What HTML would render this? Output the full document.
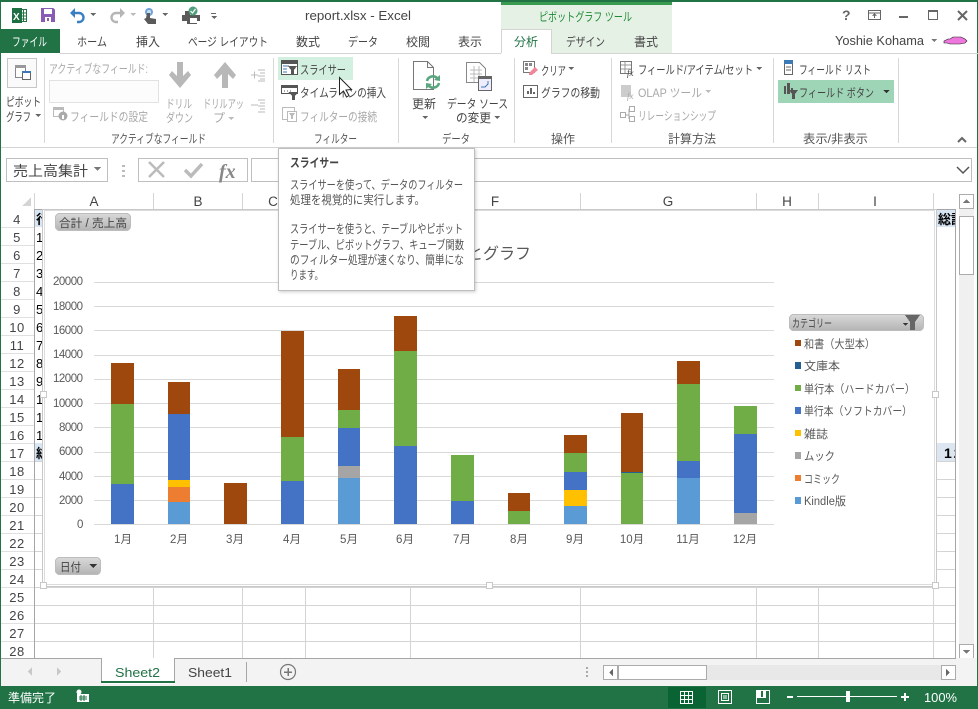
<!DOCTYPE html>
<html lang="ja"><head><meta charset="utf-8"><title>report.xlsx - Excel</title>
<style>
html,body{margin:0;padding:0;background:#fff;width:978px;height:709px;overflow:hidden}
svg{display:block;position:absolute;left:0;top:0}
text{font-family:"Liberation Sans","Noto Sans CJK JP",sans-serif;font-size:12px;fill:#444;white-space:pre}
.g{fill:#a8a8a8}.d{fill:#444}.l{font-size:11.5px;fill:#595959}
.rn{font-size:13px;fill:#444;text-anchor:middle;letter-spacing:.5px}
.ch{font-size:13.5px;fill:#444;text-anchor:middle}
.gl{font-size:12px;fill:#555}
.tp{font-size:12px;fill:#555}
.y{font-size:11.5px;fill:#595959}
.x{font-size:11.5px;fill:#595959;text-anchor:middle}
</style></head><body>
<svg width="978" height="709" viewBox="0 0 978 709" xmlns="http://www.w3.org/2000/svg" shape-rendering="crispEdges">
<defs>
<linearGradient id="btn" x1="0" y1="0" x2="0" y2="1"><stop offset="0" stop-color="#d9d9d9"/><stop offset="1" stop-color="#b4b4b4"/></linearGradient>
<clipPath id="cA"><rect x="35" y="209" width="7" height="380"/></clipPath>
<clipPath id="cJ"><rect x="937" y="209" width="18" height="260"/></clipPath>
<filter id="sh" x="-5%" y="-5%" width="110%" height="110%"><feDropShadow dx="1" dy="1" stdDeviation="1.5" flood-color="#000" flood-opacity=".2"/></filter>
</defs>
<rect width="978" height="709" fill="#fff"/>

<!-- context tab band -->
<rect x="501" y="0" width="171" height="53" fill="#e6f1e6"/>
<rect x="501" y="0" width="171" height="5" fill="#3a9a4f"/>
<!-- window border -->
<rect x="0" y="0" width="978" height="2" fill="#217346"/>
<rect x="0" y="0" width="1" height="709" fill="#217346"/>
<rect x="977" y="0" width="1" height="709" fill="#217346"/>

<!-- QAT -->
<rect x="19.500" y="9.500" width="7" height="12" fill="#fff" stroke="#217346"/><path d="M22 13h5M22 16h5M22 19h5M23.500 10v11" stroke="#217346" fill="none"/>
<rect x="12" y="8" width="10" height="15" fill="#1e6f42"/><text x="13" y="20" style="font-size:10px;font-weight:bold;fill:#fff">X</text>
<path d="M41 8h12l2 2v12H41z" fill="#8a5bb5"/><rect x="44" y="9" width="8" height="5" fill="#fff"/><rect x="45" y="17" width="6" height="5" fill="#fff"/><rect x="47" y="18" width="2" height="3" fill="#8a5bb5"/>
<g shape-rendering="auto">
<path d="M72 13h7a4.500 4.500 0 0 1 0 9h-2" fill="none" stroke="#3a7fc1" stroke-width="2.400"/><path d="M70 13l5-5v10z" fill="#3a7fc1"/>
<path d="M123 13h-7a4.500 4.500 0 0 0 0 9h2" fill="none" stroke="#b5b5b5" stroke-width="2.400"/><path d="M125 13l-5-5v10z" fill="#b5b5b5"/>
<circle cx="149" cy="12" r="4" fill="#6ea3d6"/><circle cx="149" cy="12" r="2" fill="#c9def2"/>
<path d="M147 13h3v5l6 1v5h-8l-4-5 2-1z" fill="#5a5a5a"/>
</g>
<path d="M182 15h3v-4h5v4h10v6h-3v3h-10v-3h-5z" fill="#5a5a5a"/><rect x="190" y="18" width="7" height="5" fill="#fff"/>
<g shape-rendering="auto"><circle cx="193" cy="11" r="4.500" fill="#4f9e7c"/><path d="M190.500 11l2 2 3-4" stroke="#fff" fill="none" stroke-width="1.200"/></g>
<path d="M90 13h6l-3 3z M162 13h6l-3 3z" fill="#666"/><path d="M130 13h6l-3 3z" fill="#bbb"/>
<rect x="211" y="13" width="5" height="1" fill="#666"/><path d="M211 16h6l-3 3z" fill="#666"/>

<!-- title -->
<text x="305" y="20" textLength="106" lengthAdjust="spacingAndGlyphs" style="font-size:13px">report.xlsx - Excel</text>
<text x="539" y="21" textLength="93" lengthAdjust="spacingAndGlyphs" style="fill:#1e8a35">ピボットグラフ ツール</text>

<!-- window controls -->
<text x="842" y="20" style="font-size:14px;font-weight:bold;fill:#666">?</text>
<rect x="868.500" y="10.500" width="12" height="9" fill="none" stroke="#666"/><path d="M868 13h13M874.500 18v-4M872.500 16l2-2 2 2" stroke="#666" fill="none"/>
<rect x="899" y="16" width="9" height="2" fill="#666"/>
<rect x="928.500" y="10.500" width="9" height="9" fill="none" stroke="#666"/><rect x="928" y="10" width="10" height="2" fill="#666"/>
<path d="M958 11l9 9M967 11l-9 9" stroke="#666" stroke-width="2" fill="none" shape-rendering="auto"/>

<!-- tabs -->
<rect x="1" y="29" width="59" height="24" fill="#217346"/>
<text x="12" y="46" textLength="35" lengthAdjust="spacingAndGlyphs" style="fill:#fff">ファイル</text>
<text x="77" y="46" textLength="30" lengthAdjust="spacingAndGlyphs">ホーム</text>
<text x="136" y="46" textLength="24" lengthAdjust="spacingAndGlyphs">挿入</text>
<text x="188" y="46" textLength="80" lengthAdjust="spacingAndGlyphs">ページ レイアウト</text>
<text x="296" y="46" textLength="24" lengthAdjust="spacingAndGlyphs">数式</text>
<text x="348" y="46" textLength="30" lengthAdjust="spacingAndGlyphs">データ</text>
<text x="406" y="46" textLength="24" lengthAdjust="spacingAndGlyphs">校閲</text>
<text x="458" y="46" textLength="24" lengthAdjust="spacingAndGlyphs">表示</text>
<rect x="60" y="53" width="918" height="1" fill="#d4d4d4"/>
<rect x="501" y="29" width="50" height="25" fill="#fff"/><path d="M501.500 53V29.500h50V53" fill="none" stroke="#d4d4d4"/>
<text x="514" y="46" textLength="24" lengthAdjust="spacingAndGlyphs" style="fill:#217346">分析</text>
<text x="566" y="46" textLength="39" lengthAdjust="spacingAndGlyphs">デザイン</text>
<text x="634" y="46" textLength="24" lengthAdjust="spacingAndGlyphs">書式</text>
<text x="835" y="45" textLength="89" lengthAdjust="spacingAndGlyphs" style="font-size:13px">Yoshie Kohama</text>
<path d="M931 39h6l-3 3z" fill="#777"/>
<path d="M944 41l4-2h2l3-2h8l4 2 2 2-2 2-5 1h-10l-3-1h-3z" fill="#ee77dd" stroke="#222" stroke-width=".6" shape-rendering="auto"/>

<!-- ribbon separators -->
<g fill="#d8d8d8"><rect x="44" y="58" width="1" height="85"/><rect x="273" y="58" width="1" height="85"/><rect x="398" y="58" width="1" height="85"/><rect x="514" y="58" width="1" height="85"/><rect x="611" y="58" width="1" height="85"/><rect x="773" y="58" width="1" height="85"/><rect x="898" y="58" width="1" height="85"/></g>
<rect x="1" y="147" width="976" height="1" fill="#d4d4d4"/>

<!-- pivot chart button -->
<rect x="7.500" y="58.500" width="29" height="29" fill="#fafafa" stroke="#c6c6c6"/>
<rect x="15.500" y="65.500" width="10" height="12" fill="#fff" stroke="#888"/><rect x="15" y="65" width="11" height="3" fill="#999"/>
<rect x="22.500" y="71.500" width="8" height="8" fill="#fff" stroke="#666"/><rect x="22" y="71" width="9" height="2" fill="#3d79b5"/>
<text x="6" y="106" textLength="35" lengthAdjust="spacingAndGlyphs">ピボット</text>
<text x="6" y="121" textLength="25" lengthAdjust="spacingAndGlyphs">グラフ</text>
<path d="M35 114h6l-3 3z" fill="#666"/>

<!-- active field -->
<text x="49" y="73" textLength="99" lengthAdjust="spacingAndGlyphs" class="g">アクティブなフィールド:</text>
<rect x="49.500" y="80.500" width="109" height="22" fill="#fcfcfc" stroke="#e2e2e2"/>
<rect x="53.500" y="107.500" width="10" height="9" fill="#fff" stroke="#bbb"/><rect x="53" y="107" width="11" height="3" fill="#bbb"/><circle cx="63" cy="116" r="4.500" fill="#aaa" shape-rendering="auto"/><rect x="62" y="115" width="2" height="4" fill="#fff"/>
<text x="70" y="121" textLength="78" lengthAdjust="spacingAndGlyphs" class="g">フィールドの設定</text>
<path d="M177 62h6v14l5-5 3 4-11 13-11-13 3-4 5 5z" fill="#b8b8b8" shape-rendering="auto"/>
<path d="M222 88h6V74l5 5 3-4-11-13-11 13 3 4 5-5z" fill="#b8b8b8" shape-rendering="auto"/>
<text x="166" y="108" textLength="26" lengthAdjust="spacingAndGlyphs" class="g">ドリル</text>
<text x="166" y="122" textLength="27" lengthAdjust="spacingAndGlyphs" class="g">ダウン</text>
<text x="203" y="108" textLength="41" lengthAdjust="spacingAndGlyphs" class="g">ドリルアッ</text>
<text x="213" y="122" textLength="12" lengthAdjust="spacingAndGlyphs" class="g">プ</text>
<path d="M228 117h6l-3 3z" fill="#bbb"/>
<path d="M251 75h7M254.500 71.500v7M258 70h7M260 73h5M258 76h7M260 79h5M258 81h7" stroke="#bbb" fill="none"/>
<path d="M251 105h7M258 100h7M260 103h5M258 106h7M260 109h5M258 112h7" stroke="#bbb" fill="none"/>
<text x="111" y="143" textLength="95" lengthAdjust="spacingAndGlyphs" class="gl">アクティブなフィールド</text>

<!-- filter group -->
<rect x="278" y="57" width="75" height="23" fill="#d2efdf"/>
<rect x="281.500" y="60.500" width="16" height="14" fill="#fff" stroke="#555"/><rect x="282" y="61" width="15" height="3" fill="#555"/><path d="M283 66h6M283 69h4M283 72h4" stroke="#3d79b5" fill="none"/><path d="M288 66h9l-3 4v5h-3v-5z" fill="#555"/>
<text x="300" y="74" textLength="46" lengthAdjust="spacingAndGlyphs">スライサー</text>
<rect x="281.500" y="85.500" width="16" height="8" fill="#fff" stroke="#555"/><rect x="282" y="85" width="16" height="3" fill="#555"/><path d="M284 91h1M287 91h1M290 91h1" stroke="#555"/><path d="M288 92h10l-3 4v4h-3v-4z" fill="#555"/>
<text x="300" y="97" textLength="86" lengthAdjust="spacingAndGlyphs">タイムラインの挿入</text>
<rect x="282.500" y="107.500" width="12" height="12" fill="#fff" stroke="#bbb"/><rect x="287.500" y="111.500" width="9" height="10" fill="#fff" stroke="#bbb"/><path d="M289 113h6l-2 3v3h-2v-3z" fill="#bbb"/>
<text x="300" y="121" textLength="77" lengthAdjust="spacingAndGlyphs" class="g">フィルターの接続</text>
<text x="314" y="143" textLength="43" lengthAdjust="spacingAndGlyphs" class="gl">フィルター</text>
<path d="M339.500 77.500v17l4-3.500 3 6 2.500-1.500-3-5.500 5.500-.5z" fill="#fff" stroke="#222" shape-rendering="auto"/>

<!-- data group -->
<path d="M413.500 61.500h14l6 6v22h-20z" fill="#fff" stroke="#777"/><path d="M427.500 61.500v6h6" fill="none" stroke="#777"/>
<g shape-rendering="auto"><path d="M427 81a6 6 0 0 1 10-3" fill="none" stroke="#5aa77f" stroke-width="2.600"/><path d="M439 83a6 6 0 0 1-10 3" fill="none" stroke="#5aa77f" stroke-width="2.600"/><path d="M434 80l6 1v-6z M432 84l-6-1v6z" fill="#5aa77f"/></g>
<text x="412" y="108" textLength="24" lengthAdjust="spacingAndGlyphs">更新</text>
<path d="M422 116h6l-3 3z" fill="#666"/>
<path d="M466.500 62.500h13l6 6v14h-19z" fill="#fff" stroke="#888"/><path d="M470 70h12M470 74h12M470 78h12M474 66v16M479 66v16" stroke="#bbb" fill="none"/>
<rect x="478.500" y="76.500" width="13" height="14" fill="#eef" stroke="#666"/><rect x="479" y="77" width="12" height="2" fill="#666"/><path d="M481 87h4l3-3v-3" fill="none" stroke="#3d79b5"/>
<text x="447" y="108" textLength="61" lengthAdjust="spacingAndGlyphs">データ ソース</text>
<text x="456" y="122" textLength="35" lengthAdjust="spacingAndGlyphs">の変更</text>
<path d="M494 116h6l-3 3z" fill="#666"/>
<text x="442" y="143" textLength="28" lengthAdjust="spacingAndGlyphs" class="gl">データ</text>

<!-- actions -->
<rect x="523.500" y="61.500" width="11" height="11" fill="#fff" stroke="#777"/><rect x="525" y="63" width="3" height="3" fill="#888"/><rect x="529" y="63" width="3" height="3" fill="#888"/><rect x="525" y="67" width="3" height="3" fill="#888"/>
<path d="M529 73l6-6 3 3-6 5h-3z" fill="#ee8899" shape-rendering="auto"/>
<text x="541" y="75" textLength="25" lengthAdjust="spacingAndGlyphs">クリア</text>
<path d="M568 67h6l-3 3z" fill="#666"/>
<rect x="523.500" y="85.500" width="14" height="12" fill="#fff" stroke="#666"/><path d="M527 94v-3h2v3zM530 94v-6h2v6zM533 94v-2h2v2z" fill="#666"/>
<text x="541" y="97" textLength="59" lengthAdjust="spacingAndGlyphs">グラフの移動</text>
<text x="551" y="143" textLength="24" lengthAdjust="spacingAndGlyphs" class="gl">操作</text>

<!-- calc -->
<rect x="620.500" y="61.500" width="11" height="12" fill="#fff" stroke="#777"/><path d="M621 65h10M621 69h10M625 62v11" stroke="#999" fill="none"/>
<text x="627" y="76" style="font:italic 9px 'Liberation Serif',serif;fill:#444">fx</text>
<text x="638" y="74" textLength="115" lengthAdjust="spacingAndGlyphs">フィールド/アイテム/セット</text>
<path d="M756 67h6l-3 3z" fill="#666"/>
<rect x="621" y="85" width="10" height="12" fill="#ccc"/>
<text x="627" y="99" style="font:italic 9px 'Liberation Serif',serif;fill:#aaa">fx</text>
<text x="638" y="97" textLength="64" lengthAdjust="spacingAndGlyphs" class="g">OLAP ツール</text>
<path d="M705 90h6l-3 3z" fill="#bbb"/>
<rect x="620.500" y="112.500" width="5" height="5" fill="#fff" stroke="#aaa"/><rect x="629.500" y="106.500" width="5" height="5" fill="#fff" stroke="#aaa"/><rect x="629.500" y="116.500" width="5" height="5" fill="#fff" stroke="#aaa"/><path d="M626 115h3v-6M629 115v4" stroke="#aaa" fill="none"/>
<text x="638" y="120" textLength="78" lengthAdjust="spacingAndGlyphs" class="g">リレーションシップ</text>
<text x="668" y="143" textLength="48" lengthAdjust="spacingAndGlyphs" class="gl">計算方法</text>

<!-- show/hide -->
<rect x="784.500" y="60.500" width="8" height="14" fill="#fff" stroke="#666"/><rect x="784" y="60" width="9" height="4" fill="#3d79b5"/><path d="M786 67h5M786 70h5" stroke="#666"/>
<text x="799" y="74" textLength="72" lengthAdjust="spacingAndGlyphs">フィールド リスト</text>
<rect x="778" y="80" width="116" height="23" fill="#9fd5b7"/>
<path d="M784 94v-8h2v8zM787 94v-11h3v11zM791 91v-3h2v3z" fill="#555"/><path d="M789 90h9l-3 4v5h-3v-5z" fill="#555"/>
<text x="799" y="97" textLength="75" lengthAdjust="spacingAndGlyphs">フィールド ボタン</text>
<path d="M883 90h7l-3.500 3z" fill="#333"/>
<text x="803" y="143" textLength="65" lengthAdjust="spacingAndGlyphs" class="gl">表示/非表示</text>
<path d="M958 142l4-4 4 4" fill="none" stroke="#666" stroke-width="2" shape-rendering="auto"/>

<!-- formula bar -->
<rect x="6.500" y="158.500" width="101" height="23" fill="#fff" stroke="#bfbfbf"/>
<text x="13" y="176" textLength="75" lengthAdjust="spacingAndGlyphs" style="font-size:14px;fill:#444">売上高集計</text>
<path d="M94 167h7l-3.500 4z" fill="#777"/>
<path d="M122 165h3v2h-3zM122 170h3v2h-3zM122 175h3v2h-3z" fill="#bbb"/>
<rect x="138.500" y="158.500" width="109" height="23" fill="#fff" stroke="#bfbfbf"/>
<g shape-rendering="auto"><path d="M149 162l15 15M164 162l-15 15" stroke="#bbb" stroke-width="2.500" fill="none"/>
<path d="M185 170l6 6 11-12" stroke="#bbb" stroke-width="3.500" fill="none"/></g>
<text x="219" y="178" style="font:italic bold 20px 'Liberation Serif',serif;fill:#888">fx</text>
<rect x="251.500" y="158.500" width="720" height="23" fill="#fff" stroke="#bfbfbf"/>
<path d="M957 167l6 6 6-6" fill="none" stroke="#555" stroke-width="1.500" shape-rendering="auto"/>

<!-- col headers -->
<path d="M31 197v9h-9z" fill="#d4d4d4"/>
<rect x="34" y="193" width="1" height="16" fill="#d4d4d4"/>
<g fill="#d4d4d4"><rect x="153" y="193" width="1" height="16"/><rect x="242" y="193" width="1" height="16"/><rect x="305" y="193" width="1" height="16"/><rect x="410" y="193" width="1" height="16"/><rect x="580" y="193" width="1" height="16"/><rect x="756" y="193" width="1" height="16"/><rect x="818" y="193" width="1" height="16"/><rect x="933" y="193" width="1" height="16"/></g>
<text x="94" y="206" class="ch">A</text><text x="198" y="206" class="ch">B</text><text x="273" y="206" class="ch">C</text><text x="495" y="206" class="ch">F</text><text x="668" y="206" class="ch">G</text><text x="787" y="206" class="ch">H</text><text x="875" y="206" class="ch">I</text>
<rect x="35" y="209" width="921" height="1" fill="#a6a6a6"/>

<!-- row headers -->
<g>
<text x="17" y="224" class="rn">4</text><text x="17" y="242" class="rn">5</text><text x="17" y="260" class="rn">6</text><text x="17" y="278" class="rn">7</text><text x="17" y="296" class="rn">8</text><text x="17" y="314" class="rn">9</text><text x="17" y="332" class="rn">10</text><text x="17" y="350" class="rn">11</text><text x="17" y="368" class="rn">12</text><text x="17" y="386" class="rn">13</text><text x="17" y="404" class="rn">14</text><text x="17" y="422" class="rn">15</text><text x="17" y="440" class="rn">16</text><text x="17" y="458" class="rn">17</text><text x="17" y="476" class="rn">18</text><text x="17" y="494" class="rn">19</text><text x="17" y="512" class="rn">20</text><text x="17" y="530" class="rn">21</text><text x="17" y="548" class="rn">22</text><text x="17" y="566" class="rn">23</text><text x="17" y="584" class="rn">24</text><text x="17" y="602" class="rn">25</text><text x="17" y="620" class="rn">26</text><text x="17" y="638" class="rn">27</text><text x="17" y="656" class="rn">28</text>
</g>
<g fill="#e0e0e0">
<rect x="1" y="227" width="33" height="1"/><rect x="1" y="245" width="33" height="1"/><rect x="1" y="263" width="33" height="1"/><rect x="1" y="281" width="33" height="1"/><rect x="1" y="299" width="33" height="1"/><rect x="1" y="317" width="33" height="1"/><rect x="1" y="335" width="33" height="1"/><rect x="1" y="353" width="33" height="1"/><rect x="1" y="371" width="33" height="1"/><rect x="1" y="389" width="33" height="1"/><rect x="1" y="407" width="33" height="1"/><rect x="1" y="425" width="33" height="1"/><rect x="1" y="443" width="33" height="1"/><rect x="1" y="461" width="33" height="1"/><rect x="1" y="479" width="33" height="1"/><rect x="1" y="497" width="33" height="1"/><rect x="1" y="515" width="33" height="1"/><rect x="1" y="533" width="33" height="1"/><rect x="1" y="551" width="33" height="1"/><rect x="1" y="569" width="33" height="1"/><rect x="1" y="587" width="33" height="1"/><rect x="1" y="605" width="33" height="1"/><rect x="1" y="623" width="33" height="1"/><rect x="1" y="641" width="33" height="1"/>
</g>
<rect x="34" y="209" width="1" height="449" fill="#a6a6a6"/>

<!-- col A clipped cells -->
<rect x="35" y="210" width="7" height="17" fill="#d8e6f3"/><rect x="35" y="443" width="7" height="18" fill="#d8e6f3"/>
<g fill="#d4d4d4"><rect x="35" y="461" width="7" height="1"/><rect x="35" y="479" width="7" height="1"/><rect x="35" y="497" width="7" height="1"/><rect x="35" y="515" width="7" height="1"/><rect x="35" y="533" width="7" height="1"/><rect x="35" y="551" width="7" height="1"/><rect x="35" y="569" width="7" height="1"/></g>
<g clip-path="url(#cA)" style="fill:#000">
<text x="36" y="224" style="font-size:13px;font-weight:bold;fill:#000">行</text>
<text x="36" y="242" style="font-size:13px;fill:#000">1</text><text x="36" y="260" style="font-size:13px;fill:#000">2</text><text x="36" y="278" style="font-size:13px;fill:#000">3</text><text x="36" y="296" style="font-size:13px;fill:#000">4</text><text x="36" y="314" style="font-size:13px;fill:#000">5</text><text x="36" y="332" style="font-size:13px;fill:#000">6</text><text x="36" y="350" style="font-size:13px;fill:#000">7</text><text x="36" y="368" style="font-size:13px;fill:#000">8</text><text x="36" y="386" style="font-size:13px;fill:#000">9</text><text x="36" y="404" style="font-size:13px;fill:#000">1</text><text x="36" y="422" style="font-size:13px;fill:#000">1</text><text x="36" y="440" style="font-size:13px;fill:#000">1</text>
<text x="36" y="458" style="font-size:13px;font-weight:bold;fill:#000">総</text>
</g>

<!-- grid below chart -->
<g fill="#d4d4d4">
<rect x="35" y="605" width="921" height="1"/><rect x="35" y="623" width="921" height="1"/><rect x="35" y="641" width="921" height="1"/>
<rect x="35" y="587" width="921" height="1"/>
<rect x="153" y="587" width="1" height="71"/><rect x="242" y="587" width="1" height="71"/><rect x="305" y="587" width="1" height="71"/><rect x="410" y="587" width="1" height="71"/><rect x="580" y="587" width="1" height="71"/><rect x="756" y="587" width="1" height="71"/><rect x="818" y="587" width="1" height="71"/><rect x="933" y="587" width="1" height="71"/>
</g>
<!-- col J cells -->
<rect x="937" y="210" width="18" height="17" fill="#d8e6f3"/><rect x="937" y="443" width="18" height="18" fill="#dce6f1"/>
<g fill="#d4d4d4"><rect x="937" y="461" width="18" height="1"/><rect x="937" y="479" width="18" height="1"/><rect x="937" y="497" width="18" height="1"/><rect x="937" y="515" width="18" height="1"/><rect x="937" y="533" width="18" height="1"/><rect x="937" y="551" width="18" height="1"/><rect x="937" y="569" width="18" height="1"/></g>
<g clip-path="url(#cJ)">
<text x="938" y="224" style="font-size:13px;font-weight:bold;fill:#000">総計</text>
<text x="944" y="458" style="font-size:14px;font-weight:bold;letter-spacing:2px;fill:#000">12</text>
</g>
<rect x="955" y="209" width="1" height="449" fill="#a6a6a6"/>

<!-- chart frame -->
<rect x="42.500" y="209.500" width="894" height="377" fill="#fff" stroke="#c8c8c8"/>
<rect x="44.500" y="210.500" width="890" height="374" fill="#fff" stroke="#dcdcdc"/>

<!-- gridlines -->
<g fill="#d9d9d9"><rect x="94" y="282" width="680" height="1"/><rect x="94" y="306" width="680" height="1"/><rect x="94" y="330" width="680" height="1"/><rect x="94" y="355" width="680" height="1"/><rect x="94" y="379" width="680" height="1"/><rect x="94" y="403" width="680" height="1"/><rect x="94" y="427" width="680" height="1"/><rect x="94" y="452" width="680" height="1"/><rect x="94" y="476" width="680" height="1"/><rect x="94" y="500" width="680" height="1"/><rect x="94" y="524" width="680" height="1"/></g>
<!-- y labels -->
<g>
<text x="53" y="285" class="y" textLength="30">20000</text><text x="53" y="310" class="y" textLength="30">18000</text><text x="53" y="334" class="y" textLength="30">16000</text><text x="53" y="358" class="y" textLength="30">14000</text><text x="53" y="382" class="y" textLength="30">12000</text><text x="53" y="407" class="y" textLength="30">10000</text><text x="59" y="431" class="y" textLength="24">8000</text><text x="59" y="455" class="y" textLength="24">6000</text><text x="59" y="480" class="y" textLength="24">4000</text><text x="59" y="504" class="y" textLength="24">2000</text><text x="77" y="528" class="y">0</text>
</g>
<!-- bars -->
<g>
<rect x="111" y="363" width="23" height="41" fill="#9e480e"/><rect x="111" y="404" width="23" height="80" fill="#70ad47"/><rect x="111" y="484" width="23" height="40" fill="#4472c4"/>
<rect x="168" y="382" width="22" height="32" fill="#9e480e"/><rect x="168" y="414" width="22" height="66" fill="#4472c4"/><rect x="168" y="480" width="22" height="7" fill="#ffc000"/><rect x="168" y="487" width="22" height="15" fill="#ed7d31"/><rect x="168" y="502" width="22" height="22" fill="#5b9bd5"/>
<rect x="224" y="483" width="23" height="41" fill="#9e480e"/>
<rect x="281" y="331" width="23" height="106" fill="#9e480e"/><rect x="281" y="437" width="23" height="44" fill="#70ad47"/><rect x="281" y="481" width="23" height="43" fill="#4472c4"/>
<rect x="338" y="369" width="22" height="41" fill="#9e480e"/><rect x="338" y="410" width="22" height="18" fill="#70ad47"/><rect x="338" y="428" width="22" height="38" fill="#4472c4"/><rect x="338" y="466" width="22" height="12" fill="#a5a5a5"/><rect x="338" y="478" width="22" height="46" fill="#5b9bd5"/>
<rect x="394" y="316" width="23" height="35" fill="#9e480e"/><rect x="394" y="351" width="23" height="95" fill="#70ad47"/><rect x="394" y="446" width="23" height="78" fill="#4472c4"/>
<rect x="451" y="455" width="23" height="46" fill="#70ad47"/><rect x="451" y="501" width="23" height="23" fill="#4472c4"/>
<rect x="508" y="493" width="22" height="18" fill="#9e480e"/><rect x="508" y="511" width="22" height="13" fill="#70ad47"/>
<rect x="564" y="435" width="23" height="18" fill="#9e480e"/><rect x="564" y="453" width="23" height="19" fill="#70ad47"/><rect x="564" y="472" width="23" height="18" fill="#4472c4"/><rect x="564" y="490" width="23" height="16" fill="#ffc000"/><rect x="564" y="506" width="23" height="18" fill="#5b9bd5"/>
<rect x="621" y="413" width="22" height="59" fill="#9e480e"/><rect x="621" y="472" width="22" height="1" fill="#255e91"/><rect x="621" y="473" width="22" height="51" fill="#70ad47"/>
<rect x="677" y="361" width="23" height="23" fill="#9e480e"/><rect x="677" y="384" width="23" height="77" fill="#70ad47"/><rect x="677" y="461" width="23" height="17" fill="#4472c4"/><rect x="677" y="478" width="23" height="46" fill="#5b9bd5"/>
<rect x="734" y="406" width="23" height="28" fill="#70ad47"/><rect x="734" y="434" width="23" height="79" fill="#4472c4"/><rect x="734" y="513" width="23" height="11" fill="#a5a5a5"/>
</g>
<!-- x labels -->
<g>
<text x="123" y="543" class="x">1月</text><text x="179" y="543" class="x">2月</text><text x="235" y="543" class="x">3月</text><text x="292" y="543" class="x">4月</text><text x="349" y="543" class="x">5月</text><text x="405" y="543" class="x">6月</text><text x="462" y="543" class="x">7月</text><text x="519" y="543" class="x">8月</text><text x="575" y="543" class="x">9月</text><text x="632" y="543" class="x">10月</text><text x="688" y="543" class="x">11月</text><text x="745" y="543" class="x">12月</text>
</g>
<text x="467" y="259" textLength="64" lengthAdjust="spacingAndGlyphs" style="font-size:16px;fill:#595959">とグラフ</text>

<!-- field buttons -->
<rect x="55.500" y="213.500" width="75" height="17" rx="4" fill="url(#btn)" stroke="#bdbdbd"/>
<text x="59" y="227" textLength="68" lengthAdjust="spacingAndGlyphs" style="font-size:11.500px">合計 / 売上高</text>
<rect x="55.500" y="557.500" width="45" height="17" rx="4" fill="url(#btn)" stroke="#bdbdbd"/>
<text x="60" y="571" textLength="21" lengthAdjust="spacingAndGlyphs" style="font-size:11.500px">日付</text>
<path d="M89 564h8l-4 4z" fill="#333"/>
<rect x="789.500" y="314.500" width="134" height="16" rx="4" fill="url(#btn)" stroke="#bdbdbd"/>
<text x="792" y="327" textLength="40" lengthAdjust="spacingAndGlyphs" style="font-size:11px">カテゴリー</text>
<path d="M905 315h15l-5 7v8h-5v-8z" fill="#666"/><path d="M903 323h5l-2.500 3z" fill="#333"/>

<!-- legend -->
<g>
<rect x="795" y="340" width="6" height="6" fill="#9e480e"/><text x="804" y="348" textLength="71" lengthAdjust="spacingAndGlyphs" class="l">和書（大型本）</text>
<rect x="795" y="362" width="6" height="7" fill="#255e91"/><text x="804" y="370" textLength="36" lengthAdjust="spacingAndGlyphs" class="l">文庫本</text>
<rect x="795" y="385" width="6" height="6" fill="#70ad47"/><text x="804" y="393" textLength="111" lengthAdjust="spacingAndGlyphs" class="l">単行本（ハードカバー）</text>
<rect x="795" y="407" width="6" height="7" fill="#4472c4"/><text x="804" y="415" textLength="108" lengthAdjust="spacingAndGlyphs" class="l">単行本（ソフトカバー）</text>
<rect x="795" y="430" width="6" height="6" fill="#ffc000"/><text x="804" y="438" textLength="24" lengthAdjust="spacingAndGlyphs" class="l">雑誌</text>
<rect x="795" y="452" width="6" height="7" fill="#a5a5a5"/><text x="804" y="460" textLength="31" lengthAdjust="spacingAndGlyphs" class="l">ムック</text>
<rect x="795" y="475" width="6" height="6" fill="#ed7d31"/><text x="804" y="483" textLength="36" lengthAdjust="spacingAndGlyphs" class="l">コミック</text>
<rect x="795" y="497" width="6" height="7" fill="#5b9bd5"/><text x="804" y="505" textLength="42" lengthAdjust="spacingAndGlyphs" class="l">Kindle版</text>
</g>

<!-- selection handles -->
<g fill="#fff" stroke="#c8c8c8"><rect x="40.500" y="391.500" width="6" height="6"/><rect x="40.500" y="582.500" width="6" height="6"/><rect x="486.500" y="582.500" width="6" height="6"/><rect x="932.500" y="582.500" width="6" height="6"/><rect x="932.500" y="391.500" width="6" height="6"/></g>

<!-- tooltip -->
<rect x="278.500" y="148.500" width="196" height="142" fill="#fff" stroke="#bebebe" filter="url(#sh)"/>
<text x="290" y="167" textLength="49" lengthAdjust="spacingAndGlyphs" style="font-weight:bold;fill:#444">スライサー</text>
<text x="290" y="189" textLength="173" lengthAdjust="spacingAndGlyphs" class="tp">スライサーを使って、データのフィルター</text>
<text x="290" y="204" textLength="135" lengthAdjust="spacingAndGlyphs" class="tp">処理を視覚的に実行します。</text>
<text x="290" y="233" textLength="173" lengthAdjust="spacingAndGlyphs" class="tp">スライサーを使うと、テーブルやピボット</text>
<text x="290" y="249" textLength="174" lengthAdjust="spacingAndGlyphs" class="tp">テーブル、ピボットグラフ、キューブ関数</text>
<text x="290" y="264" textLength="174" lengthAdjust="spacingAndGlyphs" class="tp">のフィルター処理が速くなり、簡単にな</text>
<text x="290" y="279" textLength="33" lengthAdjust="spacingAndGlyphs" class="tp">ります。</text>

<!-- vertical scrollbar -->
<rect x="956" y="193" width="21" height="473" fill="#fff"/>
<rect x="959" y="194" width="15" height="465" fill="#f0f0f0"/>
<rect x="959.500" y="194.500" width="14" height="14" fill="#fff" stroke="#ababab"/><path d="M963 203h7l-3.500-4z" fill="#777"/>
<rect x="959.500" y="216.500" width="14" height="58" fill="#fff" stroke="#ababab"/>
<rect x="959.500" y="644.500" width="14" height="14" fill="#fff" stroke="#ababab"/><path d="M963 650h7l-3.500 4z" fill="#777"/>

<!-- sheet tab bar -->
<rect x="1" y="658" width="976" height="28" fill="#f3f3f3"/>
<rect x="1" y="658" width="955" height="1" fill="#a6a6a6"/>
<path d="M32 667v9l-4-4.500z" fill="#c8c8c8"/><path d="M57 667v9l4-4.500z" fill="#c8c8c8"/>
<rect x="101" y="658" width="74" height="26" fill="#fff"/>
<path d="M101.500 658v23M174.500 658v23" stroke="#a6a6a6" fill="none"/><rect x="102" y="658" width="72" height="2" fill="#fff"/>
<rect x="101" y="681" width="74" height="2" fill="#217346"/>
<text x="115" y="677" textLength="45" lengthAdjust="spacingAndGlyphs" style="font-size:13px;fill:#217346">Sheet2</text>
<text x="188" y="677" textLength="44" lengthAdjust="spacingAndGlyphs" style="font-size:13px;fill:#444">Sheet1</text>
<rect x="246" y="662" width="1" height="20" fill="#a6a6a6"/>
<circle cx="288" cy="672" r="7.500" fill="none" stroke="#777" stroke-width="1.200" shape-rendering="auto"/><path d="M284 672h8M288 668v8" stroke="#777" stroke-width="1.500" fill="none"/>
<path d="M586 667h2v2h-2zM586 671h2v2h-2zM586 675h2v2h-2z" fill="#aaa"/>
<rect x="603" y="665" width="352" height="15" fill="#e8e8e8"/>
<rect x="603.500" y="665.500" width="14" height="14" fill="#fff" stroke="#ababab"/><path d="M613 669v7l-4-3.500z" fill="#666"/>
<rect x="618.500" y="665.500" width="88" height="14" fill="#fff" stroke="#ababab"/>
<rect x="941.500" y="665.500" width="14" height="14" fill="#fff" stroke="#ababab"/><path d="M946 669v7l4-3.500z" fill="#666"/>

<!-- status bar -->
<rect x="0" y="686" width="978" height="23" fill="#217346"/>
<text x="8" y="702" textLength="48" lengthAdjust="spacingAndGlyphs" style="fill:#fff">準備完了</text>
<circle cx="79" cy="692" r="2.500" fill="#fff" shape-rendering="auto"/><path d="M77 694h12v8H77z" fill="#fff"/><path d="M79 697h8M79 699h8M81 695v6M84 695v6" stroke="#217346" fill="none"/>
<rect x="668" y="687" width="38" height="21" fill="#0a6332"/>
<rect x="680.500" y="691.500" width="12" height="12" fill="none" stroke="#fff"/><path d="M680 695.500h13M680 699.500h13M684.500 691v13M688.500 691v13" stroke="#fff" fill="none"/>
<rect x="718.500" y="690.500" width="13" height="13" fill="none" stroke="#fff"/><rect x="721.500" y="693.500" width="7" height="7" fill="none" stroke="#fff"/><path d="M723 696h4M723 698h4" stroke="#fff"/>
<rect x="756.500" y="690.500" width="13" height="13" fill="none" stroke="#fff"/><rect x="757" y="690" width="4" height="8" fill="#fff"/><rect x="763" y="690" width="3" height="8" fill="#fff"/><rect x="757" y="697" width="9" height="1" fill="#fff"/>
<rect x="787" y="696" width="6" height="2" fill="#fff"/>
<rect x="797" y="696" width="100" height="1" fill="#fff"/>
<rect x="846" y="691" width="4" height="11" fill="#fff"/>
<path d="M901 696h8v2h-8zM904 693h2v8h-2z" fill="#fff"/>
<text x="924" y="702" textLength="33" lengthAdjust="spacingAndGlyphs" style="font-size:13px;fill:#fff">100%</text>
</svg>
</body></html>
